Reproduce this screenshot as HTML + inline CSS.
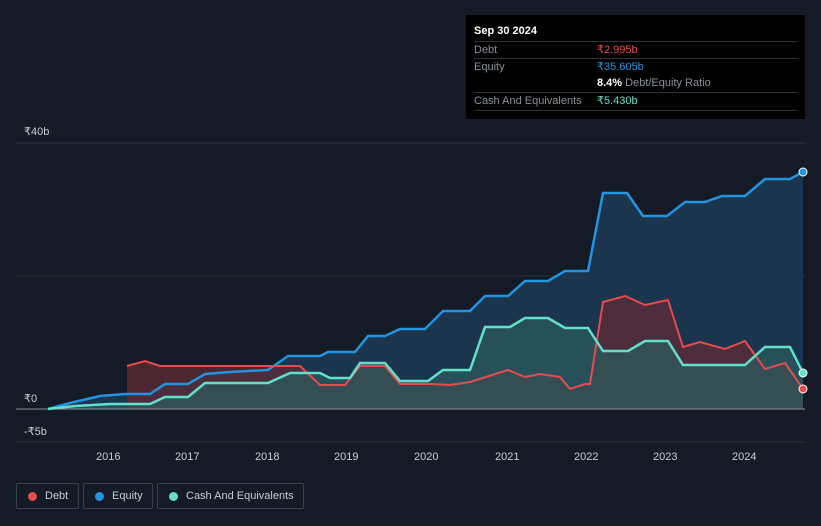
<!DOCTYPE html>
<html><head><style>
body{margin:0;width:821px;height:526px;background:#151b26;font-family:"Liberation Sans",sans-serif;overflow:hidden;position:relative}
.tip{position:absolute;left:466px;top:15px;width:339px;height:104px;background:#000;color:#fff;font-size:11px}
.tip .h{position:absolute;left:8px;top:10px;font-weight:bold;font-size:11px}
.row{position:absolute;left:8px;width:324px;border-top:1px solid #333;height:17px;line-height:17px;color:#8a8f97;white-space:nowrap}
.row span{position:absolute;left:123px}
.lg{position:absolute;top:483px;height:26px;border:1px solid #3a404b;border-radius:2px;color:#c8ccd2;font-size:11px;line-height:24px;box-sizing:border-box;white-space:nowrap}
.lg i{position:absolute;left:11px;top:8px;width:9px;height:9px;border-radius:50%}
.ax{position:absolute;color:#c8ccd2;font-size:11px}
</style></head><body>
<svg width="821" height="526" style="position:absolute;left:0;top:0">
<line x1="16" y1="143" x2="805" y2="143" stroke="#2e3440"/>
<line x1="16" y1="276" x2="805" y2="276" stroke="#2a303b"/>
<line x1="16" y1="442" x2="805" y2="442" stroke="#2a303b"/>
<path d="M48,409 L70,403 100,396 125,394 150,394 165,384 188,384 205,374 230,372 268,370 288,356 320,356 328,352 355,352 368,336 385,336 400,329 425,329 443,311 470,311 485,296 508,296 525,281 548,281 565,271 588,271 603,193 627,193 643,216 667,216 685,202 705,202 722,196 745,196 765,179 790,179 803,172 L803,409 Z" fill="#1c3a57" opacity="0.85"/>
<path d="M127,366 L145,361 160,366 268,366 300,366 320,385 345,385 360,366 385,366 400,384 430,384 450,385 470,382 508,370 525,377 540,374 560,377 570,389 585,384 590,384 603,302 625,296 645,305 668,300 683,347 700,342 725,349 745,341 765,369 785,363 803,389 L803,409 127,409Z" fill="#5a2a36" opacity="0.8"/>
<path d="M48,409 L75,406 110,404 150,404 165,397 188,397 205,383 268,383 290,373 320,373 330,378 350,378 360,363 385,363 400,381 428,381 443,370 470,370 485,327 510,327 525,318 548,318 565,328 588,328 603,351 628,351 645,341 668,341 683,365 745,365 765,347 790,347 803,373 L803,409Z" fill="#2d5a5e" opacity="0.75"/>
<line x1="16" y1="409" x2="805" y2="409" stroke="#8a9099"/>
<path d="M48,409 L70,403 100,396 125,394 150,394 165,384 188,384 205,374 230,372 268,370 288,356 320,356 328,352 355,352 368,336 385,336 400,329 425,329 443,311 470,311 485,296 508,296 525,281 548,281 565,271 588,271 603,193 627,193 643,216 667,216 685,202 705,202 722,196 745,196 765,179 790,179 803,172" fill="none" stroke="#2394df" stroke-width="2.5"/>
<path d="M127,366 L145,361 160,366 268,366 300,366 320,385 345,385 360,366 385,366 400,384 430,384 450,385 470,382 508,370 525,377 540,374 560,377 570,389 585,384 590,384 603,302 625,296 645,305 668,300 683,347 700,342 725,349 745,341 765,369 785,363 803,389" fill="none" stroke="#e64b4f" stroke-width="2"/>
<path d="M48,409 L75,406 110,404 150,404 165,397 188,397 205,383 268,383 290,373 320,373 330,378 350,378 360,363 385,363 400,381 428,381 443,370 470,370 485,327 510,327 525,318 548,318 565,328 588,328 603,351 628,351 645,341 668,341 683,365 745,365 765,347 790,347 803,373" fill="none" stroke="#62e0cb" stroke-width="2.5"/>
<circle cx="803" cy="172" r="4" fill="#2394df" stroke="#fff" stroke-width="1"/>
<circle cx="803" cy="373" r="4" fill="#62e0cb" stroke="#fff" stroke-width="1"/>
<circle cx="803" cy="389" r="4" fill="#e64b4f" stroke="#fff" stroke-width="1"/>
</svg>
<div class="ax" style="left:24px;top:125px">₹40b</div>
<div class="ax" style="left:24px;top:392px">₹0</div>
<div class="ax" style="left:24px;top:425px">-₹5b</div>
<div class="ax" style="left:96px;top:451px">2016</div>
<div class="ax" style="left:175px;top:451px">2017</div>
<div class="ax" style="left:255px;top:451px">2018</div>
<div class="ax" style="left:334px;top:451px">2019</div>
<div class="ax" style="left:414px;top:451px">2020</div>
<div class="ax" style="left:495px;top:451px">2021</div>
<div class="ax" style="left:574px;top:451px">2022</div>
<div class="ax" style="left:653px;top:451px">2023</div>
<div class="ax" style="left:732px;top:451px">2024</div>
<div class="tip">
<div class="h">Sep 30 2024</div>
<div class="row" style="top:26px">Debt<span style="color:#e64b4f">₹2.995b</span></div>
<div class="row" style="top:43px">Equity<span style="color:#2394df">₹35.605b</span></div>
<div class="row" style="top:60px;border-top:none"><span><b style="color:#fff">8.4%</b> Debt/Equity Ratio</span></div>
<div class="row" style="top:77px;border-bottom:1px solid #333">Cash And Equivalents<span style="color:#62e0cb">₹5.430b</span></div>
</div>
<div class="lg" style="left:16px;width:63px"><i style="background:#e64b4f"></i><span style="position:absolute;left:28px">Debt</span></div>
<div class="lg" style="left:83px;width:70px"><i style="background:#2394df"></i><span style="position:absolute;left:28px">Equity</span></div>
<div class="lg" style="left:157px;width:147px"><i style="background:#62e0cb"></i><span style="position:absolute;left:28px">Cash And Equivalents</span></div>
</body></html>
